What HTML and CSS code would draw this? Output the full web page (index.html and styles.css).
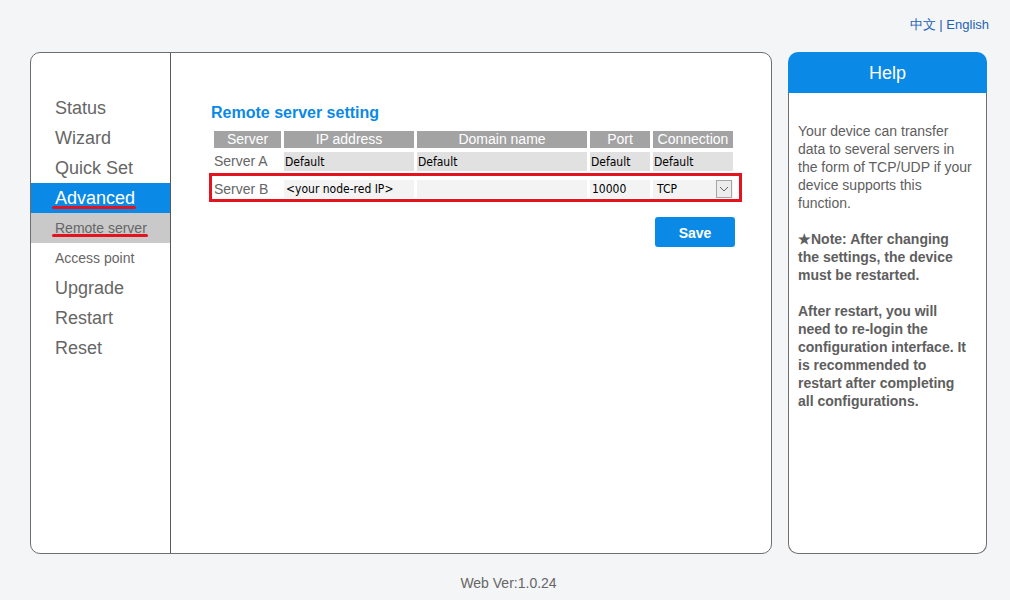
FILE: index.html
```html
<!DOCTYPE html>
<html lang="en">
<head>
<meta charset="utf-8">
<title>Remote server setting</title>
<link rel="stylesheet" href="styles.css">
</head>
<body>
<div class="top">
  <div class="lang"><a class="lang-link">中文</a> | <a class="lang-link">English</a></div>
</div>
<div class="wrap">
  <div class="main">
    <nav class="side">
      <div class="item">Status</div>
      <div class="item">Wizard</div>
      <div class="item">Quick Set</div>
      <div class="item active"><span class="mark">Advanced</span></div>
      <div class="item sub current"><span class="mark">Remote server</span></div>
      <div class="item sub">Access point</div>
      <div class="item">Upgrade</div>
      <div class="item">Restart</div>
      <div class="item">Reset</div>
    </nav>
    <section class="content">
      <h2 class="title">Remote server setting</h2>
      <div class="form">
        <div class="row head">
          <div class="th">Server</div>
          <div class="th">IP address</div>
          <div class="th">Domain name</div>
          <div class="th">Port</div>
          <div class="th">Connection</div>
        </div>
        <div class="row rowa">
          <div class="label">Server A</div>
          <div class="val">Default</div>
          <div class="val">Default</div>
          <div class="val">Default</div>
          <div class="val">Default</div>
        </div>
        <div class="highlight">
          <div class="row rowb">
            <div class="label">Server B</div>
            <input class="field" type="text" value="&lt;your node-red IP&gt;">
            <input class="field" type="text" value="">
            <input class="field" type="text" value="10000">
            <div class="select">
              <span class="sel-text">TCP</span>
              <span class="sel-btn"><svg width="10" height="6" viewBox="0 0 10 6"><path d="M1 1 L5 5 L9 1" fill="none" stroke="#666" stroke-width="1"/></svg></span>
            </div>
          </div>
        </div>
        <div class="actions">
          <button class="save" type="button">Save</button>
        </div>
      </div>
    </section>
  </div>
  <aside class="help">
    <div class="help-head">Help</div>
    <div class="help-body">
      <p>Your device can transfer data to several servers in the form of TCP/UDP if your device supports this function.</p>
      <p class="bold">★Note: After changing the settings, the device must be restarted.</p>
      <p class="bold">After restart, you will need to re-login the configuration interface. It is recommended to restart after completing all configurations.</p>
    </div>
  </aside>
</div>
<footer class="footer">Web Ver:1.0.24</footer>
</body>
</html>
```
FILE: styles.css
```css
html, body {
  margin: 0;
  padding: 0;
}
body {
  background: #f4f5f7;
  font-family: "Liberation Sans", Arial, sans-serif;
  color: #666;
  width: 1010px;
}
.top {
  height: 52px;
  display: flex;
  justify-content: flex-end;
  align-items: flex-start;
  padding-right: 21px;
  box-sizing: border-box;
}
.lang {
  margin-top: 17px;
  font-size: 13px;
  line-height: 16px;
  color: #1d62b5;
}
.lang-link {
  color: #1d62b5;
  text-decoration: none;
}
.wrap {
  display: flex;
  gap: 16px;
  margin-left: 30px;
  width: 957px;
  height: 502px;
}
.main {
  width: 742px;
  box-sizing: border-box;
  border: 1px solid #6e6e6e;
  border-radius: 10px;
  background: #fff;
  display: flex;
  overflow: hidden;
}
.side {
  width: 140px;
  box-sizing: border-box;
  border-right: 1px solid #5a5a5a;
  padding-top: 40px;
  flex: none;
}
.item {
  height: 30px;
  line-height: 30px;
  padding-left: 24px;
  font-size: 18px;
  color: #666;
}
.item.sub {
  font-size: 14px;
}
.item.active {
  background: #0a89e6;
  color: #fff;
}
.item.current {
  background: #c9c9c9;
}
.mark {
  position: relative;
}
.mark::after {
  content: "";
  position: absolute;
  left: -3px;
  right: -1px;
  bottom: -1px;
  height: 3px;
  background: #e3141d;
  border-radius: 2px;
}
.content {
  flex: 1;
  padding: 51px 0 0 40px;
}
.title {
  margin: 0 0 9px;
  font-size: 16px;
  line-height: 18px;
  font-weight: bold;
  color: #0a89e6;
}
.form {
  width: 531px;
}
.row {
  display: grid;
  grid-template-columns: 67px 130px 170px 60px 80px;
  column-gap: 3px;
}
.head {
  margin-left: 3px;
}
.th {
  background: #a3a3a3;
  color: #fff;
  font-size: 14px;
  line-height: 17px;
  height: 17px;
  text-align: center;
}
.rowa {
  margin-left: 3px;
  margin-top: 4px;
}
.label {
  font-size: 14px;
  color: #666;
  line-height: 19px;
}
.val {
  background: #e1e1e1;
  height: 19px;
  box-sizing: border-box;
  padding: 1px 0 0 1px;
  line-height: 19px;
  font-family: "DejaVu Sans Condensed", "DejaVu Sans", Verdana, sans-serif;
  font-stretch: semi-condensed;
  font-size: 12px;
  color: #000;
}
.highlight {
  margin: 2px 0 0 -2px;
  border: 3px solid #e3141d;
  padding: 4px 6px 1px 2px;
  width: 533px;
  box-sizing: border-box;
}
.rowb .label {
  line-height: 18px;
}
.field {
  display: block;
  width: 100%;
  height: 18px;
  box-sizing: border-box;
  border: 0;
  margin: 0;
  padding: 0 2px;
  background: #f3f3f3;
  font-family: "DejaVu Sans Condensed", "DejaVu Sans", Verdana, sans-serif;
  font-stretch: semi-condensed;
  font-size: 12px;
  color: #000;
  outline: none;
}
.select {
  display: flex;
  justify-content: space-between;
  align-items: center;
  height: 18px;
  background: #f3f3f3;
  padding-left: 4px;
}
.sel-text {
  font-family: "DejaVu Sans Condensed", "DejaVu Sans", Verdana, sans-serif;
  font-stretch: semi-condensed;
  font-size: 12px;
  color: #000;
}
.sel-btn {
  width: 16px;
  height: 18px;
  box-sizing: border-box;
  border: 1px solid #a5a5a5;
  background: #ececec;
  display: flex;
  align-items: center;
  justify-content: center;
  margin-right: 1px;
}
.actions {
  display: flex;
  justify-content: flex-end;
  padding-right: 7px;
  margin-top: 15px;
}
.save {
  width: 80px;
  height: 30px;
  border: 0;
  border-radius: 3px;
  background: #0a89e6;
  color: #fff;
  font-family: "Liberation Sans", Arial, sans-serif;
  font-weight: bold;
  font-size: 14px;
  padding: 2px 0 0;
}
.help {
  width: 199px;
  display: flex;
  flex-direction: column;
  flex: none;
}
.help-head {
  height: 41px;
  line-height: 42px;
  background: #0a89e6;
  color: #fff;
  text-align: center;
  font-size: 18px;
  border-radius: 10px 10px 0 0;
}
.help-body {
  flex: 1;
  background: #fff;
  border: 1px solid #6e6e6e;
  border-top: 0;
  border-radius: 0 0 10px 10px;
  padding: 29px 9px 0 9px;
  font-size: 14px;
  line-height: 18px;
  color: #5e5e5e;
}
.help-body p {
  margin: 0 0 18px;
}
.help-body .bold {
  font-weight: bold;
  margin-right: 4px;
}
.footer {
  width: 957px;
  margin-left: 30px;
  margin-top: 21px;
  text-align: center;
  font-size: 14px;
  line-height: 16px;
  color: #666;
}
```
